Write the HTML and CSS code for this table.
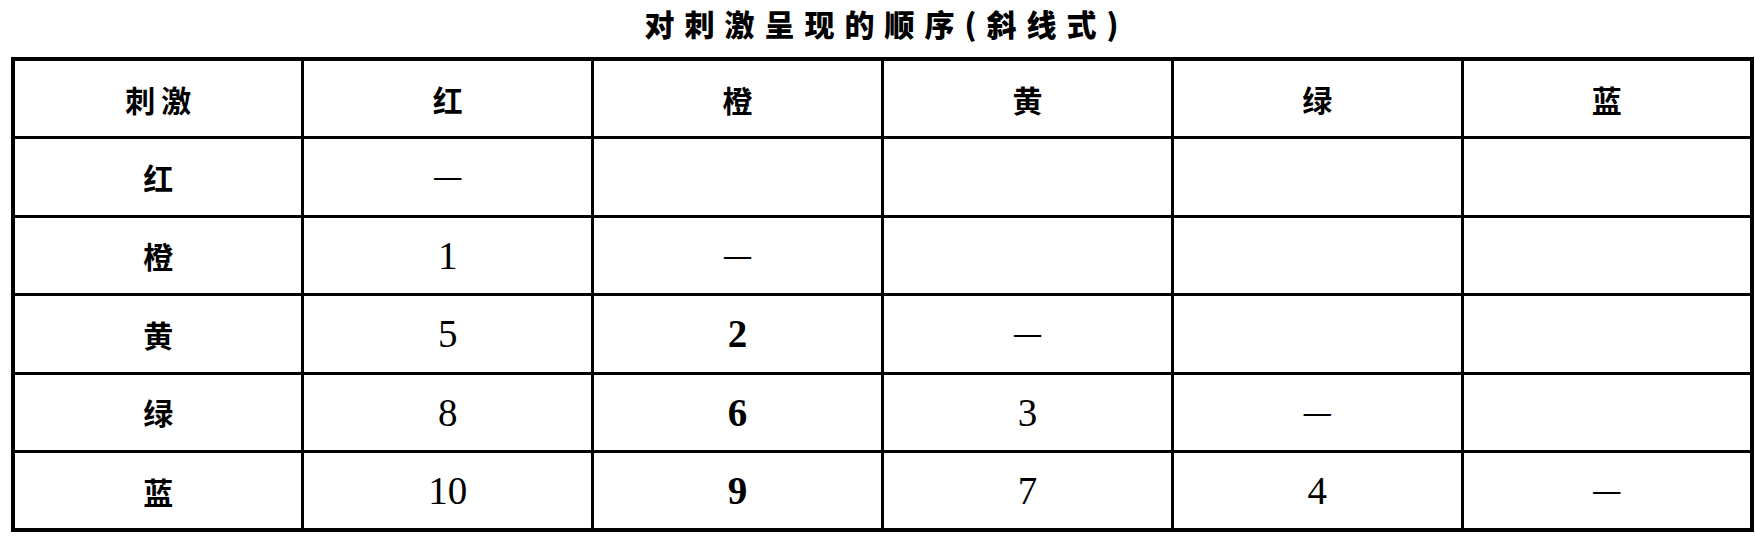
FILE: index.html
```html
<!DOCTYPE html>
<html lang="zh-CN">
<head>
<meta charset="utf-8">
<title>对刺激呈现的顺序(斜线式)</title>
<link rel="stylesheet" href="styles.css">
</head>
<body>
<div class="page">
  <h1 class="title">对刺激呈现的顺序(斜线式)</h1>
  <table class="grid">
    <tr class="head">
      <th class="wide">刺激</th><th>红</th><th>橙</th><th>黄</th><th>绿</th><th>蓝</th>
    </tr>
    <tr>
      <th>红</th><td class="dash">—</td><td></td><td></td><td></td><td></td>
    </tr>
    <tr>
      <th>橙</th><td>1</td><td class="dash">—</td><td></td><td></td><td></td>
    </tr>
    <tr>
      <th>黄</th><td>5</td><td class="b">2</td><td class="dash">—</td><td></td><td></td>
    </tr>
    <tr>
      <th>绿</th><td>8</td><td class="b">6</td><td>3</td><td class="dash">—</td><td></td>
    </tr>
    <tr>
      <th>蓝</th><td>10</td><td class="b">9</td><td>7</td><td>4</td><td class="dash">—</td>
    </tr>
  </table>
</div>
</body>
</html>
```

FILE: styles.css
```css
html, body {
  margin: 0;
  padding: 0;
  background: #fff;
  color: #000;
}

.page {
  width: 1743px;
  margin-left: 11px;
  padding-top: 8px;
}

.title {
  margin: 0 0 19px 0;
  padding-left: 8px;
  height: 30px;
  font-family: "Noto Sans CJK SC", "Liberation Sans", sans-serif;
  font-weight: 900;
  font-size: 30px;
  line-height: 30px;
  letter-spacing: 10px;
  text-align: center;
}

.grid {
  width: 1743px;
  table-layout: fixed;
  border-collapse: collapse;
  border: 4px solid #000;
}

.grid th,
.grid td {
  border: 3px solid #000;
  height: 75px;
  padding: 0;
  text-align: center;
  vertical-align: middle;
}

.grid tr {
  height: 78.5px;
}

.grid th {
  font-family: "Noto Sans CJK SC", "Liberation Serif", sans-serif;
  font-weight: 700;
  font-size: 30px;
}

.grid th.wide {
  letter-spacing: 6px;
  padding-left: 6px;
}

.grid td {
  font-family: "Liberation Serif", "Noto Sans CJK SC", serif;
  font-weight: 400;
  font-size: 39px;
}

.grid td.b {
  font-weight: 700;
}

.grid td.dash {
  font-size: 27px;
  font-weight: 700;
  line-height: 1;
}
```
